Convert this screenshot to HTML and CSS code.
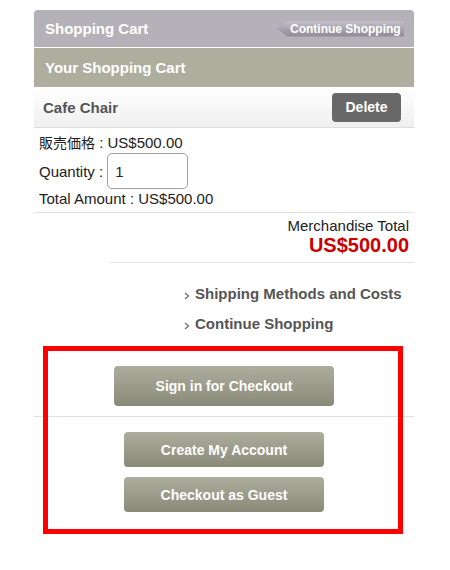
FILE: index.html
```html
<!DOCTYPE html>
<html lang="en">
<head>
    <meta charset="UTF-8">
    <meta name="viewport" content="width=device-width, initial-scale=1.0">
    <title>Shopping Cart</title>
    <link rel="stylesheet" href="styles.css">
</head>
<body>
    <div class="cart">
        <div class="topbar">
            <span class="topbar-title">Shopping Cart</span>
            <a href="#" class="back-btn">Continue Shopping</a>
        </div>
        <div class="subbar">Your Shopping Cart</div>

        <div class="item-head">
            <span class="item-name">Cafe Chair</span>
            <button class="btn-delete">Delete</button>
        </div>
        <div class="item-body">
            <div class="item-line"><span class="jp">販売価格</span> : US$500.00</div>
            <div class="item-line qty">Quantity : <input type="text" class="qty-input" value="1"></div>
            <div class="item-line">Total Amount : US$500.00</div>
        </div>

        <div class="summary">
            <div class="summary-label">Merchandise Total</div>
            <div class="summary-total">US$500.00</div>
        </div>

        <ul class="links">
            <li><a href="#"><svg class="chev" width="6" height="8" viewBox="0 0 6 8"><path d="M1 1 L4.5 4 L1 7" fill="none" stroke="#777" stroke-width="1.4"/></svg>Shipping Methods and Costs</a></li>
            <li><a href="#"><svg class="chev" width="6" height="8" viewBox="0 0 6 8"><path d="M1 1 L4.5 4 L1 7" fill="none" stroke="#777" stroke-width="1.4"/></svg>Continue Shopping</a></li>
        </ul>

        <div class="checkout">
            <div class="signin-row">
                <button class="btn btn-signin">Sign in for Checkout</button>
            </div>
            <div class="guest-row">
                <button class="btn btn-guest">Create My Account</button>
                <button class="btn btn-guest">Checkout as Guest</button>
            </div>
            <div class="highlight"></div>
        </div>
    </div>
</body>
</html>
```

FILE: styles.css
```css
body {
    margin: 0;
    padding: 0;
    background: #fff;
    font-family: 'Liberation Sans', Arial, 'Noto Sans CJK JP', sans-serif;
    color: #222;
}
.cart {
    width: 380px;
    margin: 10px 0 0 34px;
}

/* header bars */
.topbar {
    height: 37px;
    background: #b4b1b9;
    border-radius: 4px 4px 0 0;
    border-bottom: 1px solid #fff;
    display: flex;
    align-items: center;
    justify-content: space-between;
    padding: 0 10px 0 11px;
}
.topbar-title {
    color: #fff;
    font-size: 15px;
    font-weight: bold;
}
.back-btn {
    display: flex;
    align-items: center;
    height: 16px;
    width: 127px;
    padding-left: 13px;
    box-sizing: border-box;
    background: linear-gradient(to bottom, #c2bfc7, #a19eaa 60%, #8f8c98);
    clip-path: polygon(0 50%, 10px 0, 100% 0, 100% 100%, 10px 100%);
    color: #fff;
    font-size: 12px;
    font-weight: bold;
    text-decoration: none;
}
.subbar {
    height: 39px;
    line-height: 39px;
    background: #aeae9f;
    color: #fff;
    font-size: 15px;
    font-weight: bold;
    padding-left: 11px;
}

/* item */
.item-head {
    height: 40px;
    display: flex;
    align-items: center;
    justify-content: space-between;
    padding: 0 13px 0 9px;
    background: linear-gradient(to bottom, #fff, #efefef);
    border-bottom: 1px solid #ddd;
}
.item-name {
    font-size: 15px;
    font-weight: bold;
    color: #555;
}
.btn-delete {
    width: 69px;
    height: 29px;
    border: none;
    border-radius: 4px;
    background: #686868;
    color: #fff;
    font-family: inherit;
    font-size: 14px;
    font-weight: bold;
    padding: 0;
}
.item-body {
    padding: 5px 5px 4px;
    border-bottom: 1px solid #e2e2e2;
    font-size: 15px;
    line-height: 19px;
}
.jp {
    font-size: 14px;
}
.qty {
    display: flex;
    align-items: center;
    gap: 4px;
}
.qty-input {
    width: 81px;
    height: 36px;
    box-sizing: border-box;
    border: 1px solid #a0a0a0;
    border-radius: 5px;
    padding: 0 7px;
    font-family: inherit;
    font-size: 15px;
    color: #222;
}

/* totals */
.summary {
    margin-left: 76px;
    padding: 3px 5px 7px 0;
    border-bottom: 1px solid #e2e2e2;
    text-align: right;
}
.summary-label {
    font-size: 15px;
    line-height: 19px;
}
.summary-total {
    font-size: 20px;
    line-height: 20px;
    font-weight: bold;
    color: #cc0000;
}

.links {
    list-style: none;
    margin: 0;
    padding: 16px 0 0 150px;
}
.links li {
    line-height: 30px;
}
.links a {
    color: #555;
    font-size: 15px;
    font-weight: bold;
    text-decoration: none;
}
.chev {
    margin: 0 5px 0 0;
    vertical-align: -1px;
}

/* checkout buttons */
.checkout {
    position: relative;
}
.signin-row {
    display: flex;
    justify-content: center;
    padding: 27px 0 10px;
    border-bottom: 1px solid #e0e0e0;
}
.guest-row {
    display: flex;
    flex-direction: column;
    align-items: center;
    gap: 10px;
    padding: 15px 0 22px;
}
.btn {
    border: none;
    border-radius: 4px;
    background: linear-gradient(to bottom, #adad9e, #8a8a79);
    color: #fff;
    font-family: inherit;
    font-size: 14px;
    font-weight: bold;
    padding: 0;
}
.btn-signin {
    width: 220px;
    height: 40px;
}
.btn-guest {
    width: 200px;
    height: 35px;
}
.highlight {
    position: absolute;
    left: 9px;
    top: 7px;
    width: 360px;
    height: 188px;
    box-sizing: border-box;
    border: 5px solid #ff0000;
    pointer-events: none;
}
```
